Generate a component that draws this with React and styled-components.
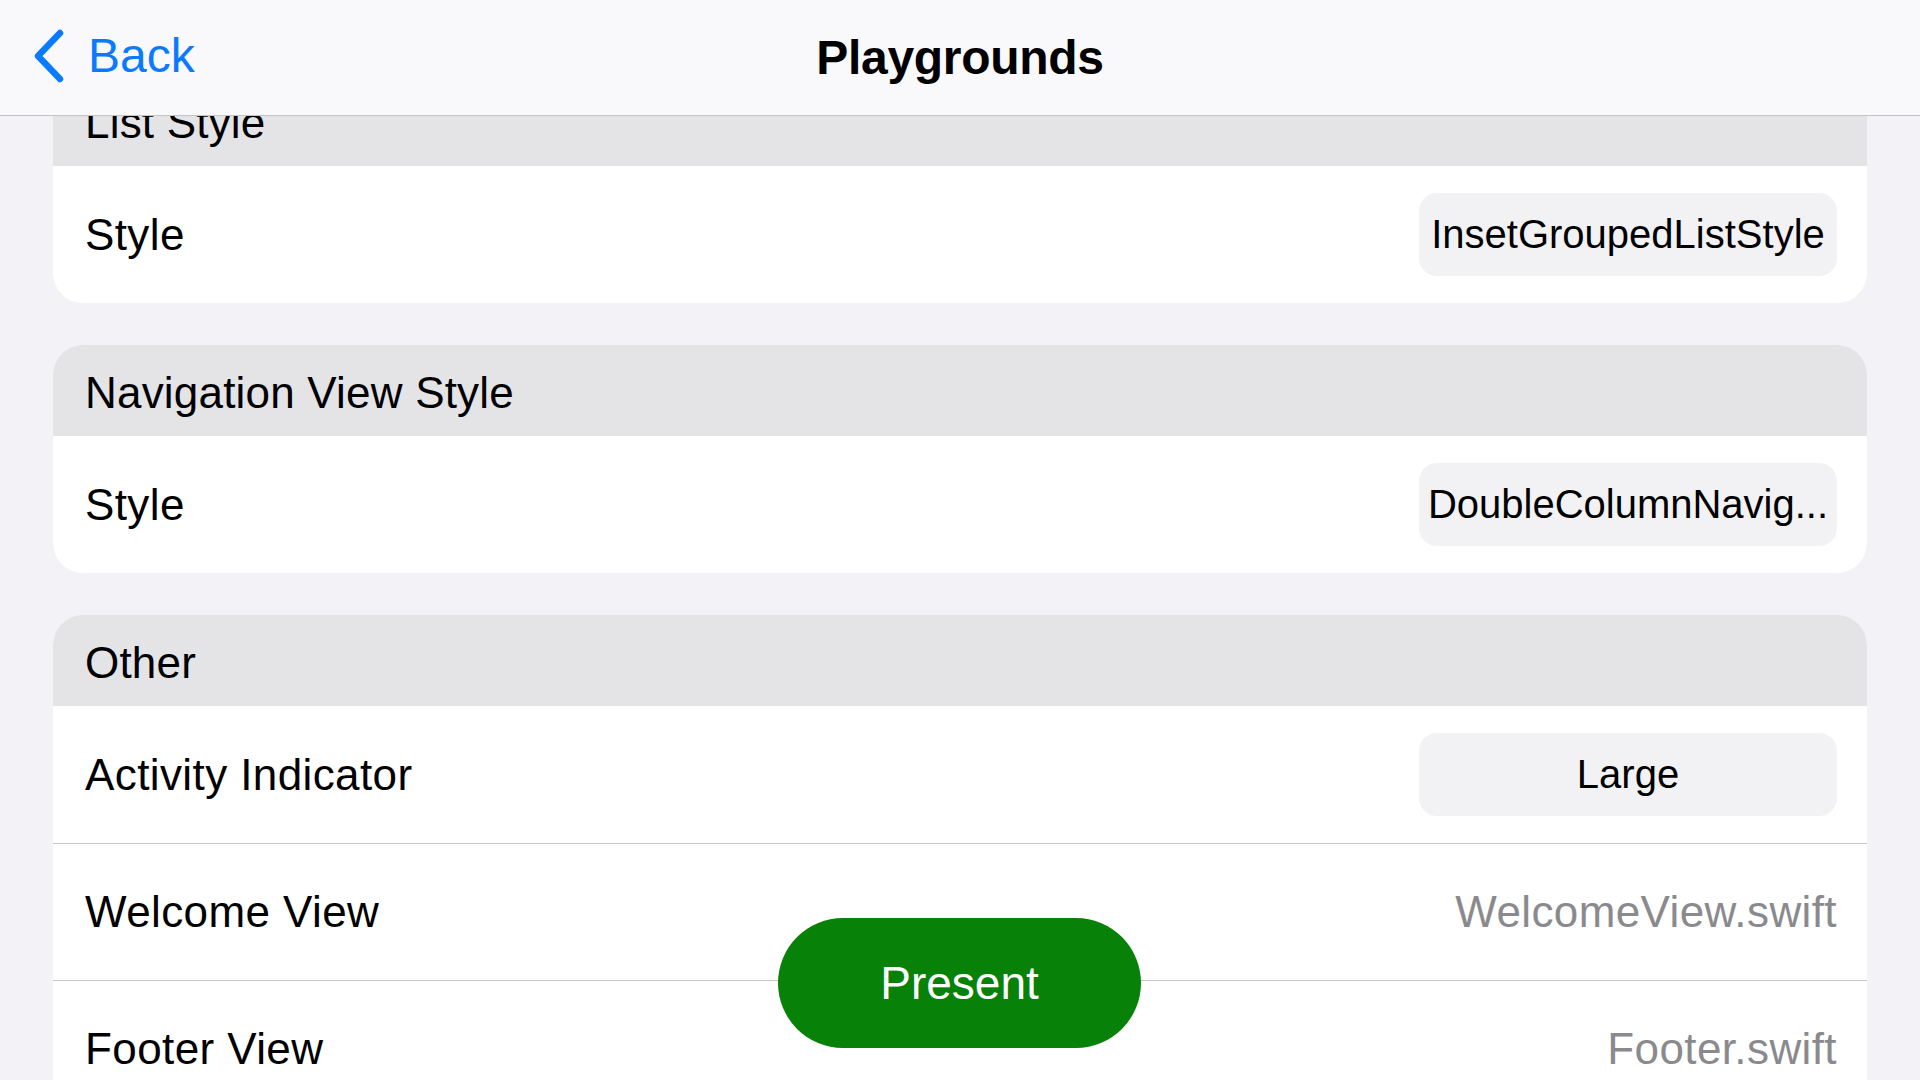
import React from "react";
import styled, { createGlobalStyle } from "styled-components";

const GlobalStyle = createGlobalStyle`
  html, body {
    margin: 0;
    padding: 0;
    background: #f2f2f7;
    font-family: "Liberation Sans", Arial, sans-serif;
    color: #000;
    overflow: hidden;
  }
`;

const sections = [
  {
    title: "List Style",
    rows: [{ label: "Style", value: "InsetGroupedListStyle", kind: "pill" }],
  },
  {
    title: "Navigation View Style",
    rows: [{ label: "Style", value: "DoubleColumnNavig...", kind: "pill" }],
  },
  {
    title: "Other",
    rows: [
      { label: "Activity Indicator", value: "Large", kind: "pill" },
      { label: "Welcome View", value: "WelcomeView.swift", kind: "file" },
      { label: "Footer View", value: "Footer.swift", kind: "file" },
    ],
  },
];

export default function App() {
  return (
    <Screen>
      <GlobalStyle />
      <NavBar>
        <BackButton>
          <svg width="34" height="54" viewBox="0 0 34 54" fill="none">
            <path
              d="M28 4 L6 27 L28 50"
              stroke="#0a7aff"
              strokeWidth="6.5"
              strokeLinecap="round"
              strokeLinejoin="round"
            />
          </svg>
          <span>Back</span>
        </BackButton>
        <Title>Playgrounds</Title>
      </NavBar>

      <List>
        {sections.map((section) => (
          <Card key={section.title}>
            <CardHeader>{section.title}</CardHeader>
            {section.rows.map((row) => (
              <Row key={row.label}>
                <Label>{row.label}</Label>
                {row.kind === "pill" ? (
                  <Pill>{row.value}</Pill>
                ) : (
                  <FileName>{row.value}</FileName>
                )}
              </Row>
            ))}
          </Card>
        ))}
      </List>

      <PresentButton>Present</PresentButton>
    </Screen>
  );
}

const Screen = styled.div`
  position: relative;
  width: 1920px;
  height: 1080px;
  overflow: hidden;
  background: #f2f2f7;
`;

const NavBar = styled.header`
  position: absolute;
  top: 0;
  left: 0;
  right: 0;
  z-index: 10;
  height: 115px;
  display: flex;
  align-items: center;
  justify-content: center;
  background: #f9f9fb;
  border-bottom: 1.5px solid #c4c4c7;
`;

const BackButton = styled.div`
  position: absolute;
  left: 32px;
  top: 29px;
  display: flex;
  align-items: center;
  gap: 22px;
  color: #0a7aff;
  font-size: 48px;

  span {
    margin-top: -2px;
  }
`;

const Title = styled.h1`
  margin: 0;
  font-size: 48px;
  font-weight: 700;
  letter-spacing: -0.3px;
`;

const List = styled.main`
  display: flex;
  flex-direction: column;
  gap: 42px;
  padding: 75px 53px 0 53px;
`;

const Card = styled.section`
  background: #fff;
  border-radius: 30px;
  overflow: hidden;
`;

const CardHeader = styled.div`
  height: 91px;
  display: flex;
  align-items: center;
  padding: 4px 32px 0;
  box-sizing: border-box;
  background: #e4e4e7;
  font-size: 44px;
  letter-spacing: 0.2px;
`;

const Row = styled.div`
  height: 137px;
  display: flex;
  align-items: center;
  justify-content: space-between;
  padding: 0 30px 0 32px;
  box-sizing: border-box;

  & + & {
    border-top: 1.5px solid #c6c6c9;
  }
`;

const Label = styled.span`
  font-size: 44px;
  letter-spacing: 0.4px;
`;

const Pill = styled.span`
  width: 418px;
  height: 83px;
  display: flex;
  align-items: center;
  justify-content: center;
  border-radius: 18px;
  background: #f2f2f4;
  font-size: 40px;
  white-space: nowrap;
`;

const FileName = styled.span`
  font-size: 44px;
  letter-spacing: 0.4px;
  color: #8a8a8e;
`;

const PresentButton = styled.button`
  position: absolute;
  left: 778px;
  bottom: 32px;
  width: 363px;
  height: 130px;
  border: none;
  border-radius: 65px;
  background: #078107;
  color: #fff;
  font-family: "Liberation Sans", Arial, sans-serif;
  font-size: 46px;
  font-weight: 500;
  z-index: 5;
`;
